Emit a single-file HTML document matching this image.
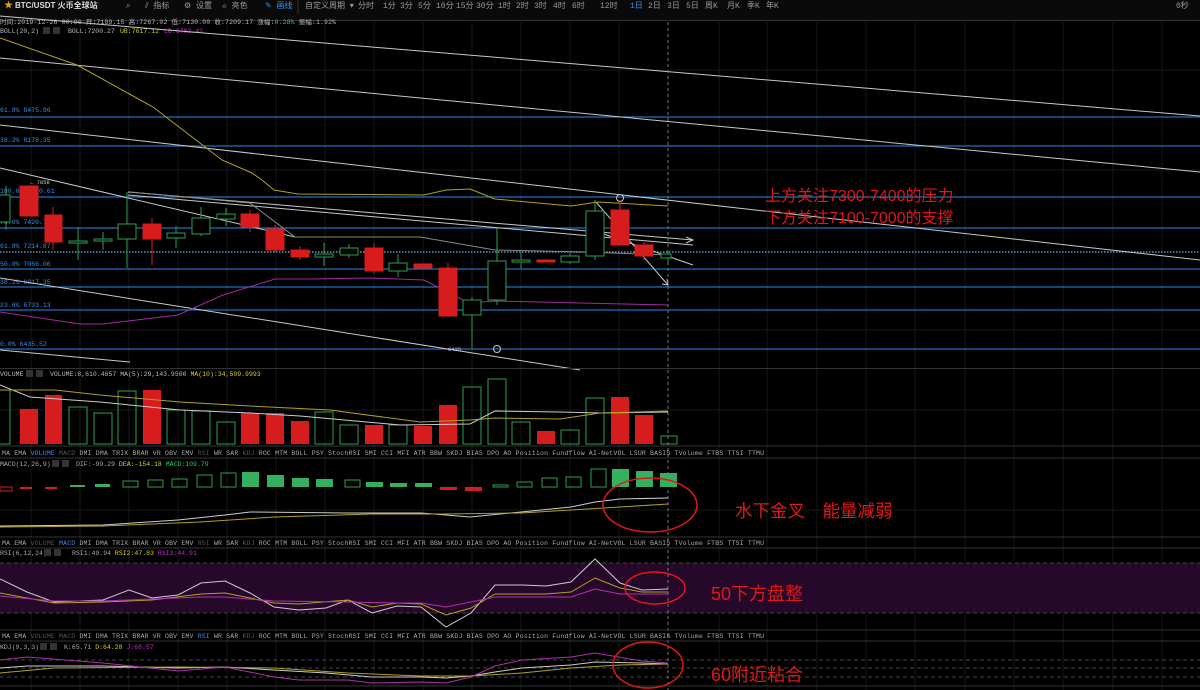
<!DOCTYPE html><html><head><meta charset="utf-8"><style>
html,body{margin:0;padding:0;background:#000;width:1200px;height:690px;overflow:hidden}
svg text{font-family:"Liberation Mono","Noto Sans CJK SC",monospace}
.t{font-family:"Liberation Sans","Noto Sans CJK SC",sans-serif}
</style></head><body>
<svg width="1200" height="690" viewBox="0 0 1200 690" xmlns="http://www.w3.org/2000/svg">
<rect width="1200" height="690" fill="#000"/>
<g stroke="#181818" stroke-width="1">
<line x1="31" y1="22" x2="31" y2="690"/><line x1="80" y1="22" x2="80" y2="690"/><line x1="129" y1="22" x2="129" y2="690"/><line x1="178" y1="22" x2="178" y2="690"/><line x1="227" y1="22" x2="227" y2="690"/><line x1="276" y1="22" x2="276" y2="690"/><line x1="325" y1="22" x2="325" y2="690"/><line x1="374" y1="22" x2="374" y2="690"/><line x1="423" y1="22" x2="423" y2="690"/><line x1="472" y1="22" x2="472" y2="690"/><line x1="521" y1="22" x2="521" y2="690"/><line x1="570" y1="22" x2="570" y2="690"/><line x1="619" y1="22" x2="619" y2="690"/><line x1="719" y1="22" x2="719" y2="690"/><line x1="767" y1="22" x2="767" y2="690"/><line x1="817" y1="22" x2="817" y2="690"/><line x1="866" y1="22" x2="866" y2="690"/><line x1="915" y1="22" x2="915" y2="690"/><line x1="965" y1="22" x2="965" y2="690"/><line x1="1014" y1="22" x2="1014" y2="690"/><line x1="1063" y1="22" x2="1063" y2="690"/><line x1="1113" y1="22" x2="1113" y2="690"/><line x1="1162" y1="22" x2="1162" y2="690"/>
<line x1="0" y1="70" x2="1200" y2="70"/><line x1="0" y1="170" x2="1200" y2="170"/><line x1="0" y1="330" x2="1200" y2="330"/><line x1="0" y1="410" x2="1200" y2="410"/><line x1="0" y1="510" x2="1200" y2="510"/>
</g>
<rect x="0" y="563" width="1200" height="50" fill="#26082a"/>
<g stroke="#444" stroke-dasharray="4,3"><line x1="0" y1="563" x2="1200" y2="563"/><line x1="0" y1="613" x2="1200" y2="613"/><line x1="0" y1="660" x2="1200" y2="660"/><line x1="0" y1="668" x2="1200" y2="668"/><line x1="0" y1="677" x2="1200" y2="677"/></g>
<rect x="0" y="0" width="1200" height="20" fill="#0a0a0a"/>
<line x1="0" y1="20.5" x2="1200" y2="20.5" stroke="#333"/>
<g class="t" font-size="8" fill="#9a9a9a">
<text x="4" y="8" fill="#e0a020" font-size="9">★</text>
<text x="15" y="8" fill="#ddd" font-size="8" font-weight="bold" class="t">BTC/USDT 火币全球站</text>
<text x="126" y="8">⌕</text><text x="145" y="8">⫽ 指标</text><text x="184" y="8">⚙ 设置</text><text x="222" y="8">☼ 亮色</text><text x="265" y="8" fill="#3a8ee6">✎ 画线</text>
<line x1="298" y1="0" x2="298" y2="14" stroke="#333"/>
<text x="305" y="8">自定义周期 ▾</text><text x="358" y="8">分时</text><text x="383" y="8">1分</text><text x="400" y="8">3分</text><text x="418" y="8">5分</text><text x="436" y="8">10分</text><text x="456" y="8">15分</text><text x="476" y="8">30分</text><text x="498" y="8">1时</text><text x="516" y="8">2时</text><text x="534" y="8">3时</text><text x="553" y="8">4时</text><text x="572" y="8">6时</text><text x="600" y="8">12时</text><text x="630" y="8" fill="#3a8ee6">1日</text><text x="648" y="8">2日</text><text x="667" y="8">3日</text><text x="686" y="8">5日</text><text x="705" y="8">周K</text><text x="727" y="8">月K</text><text x="747" y="8">季K</text><text x="766" y="8">年K</text>
<text x="1176" y="8">0秒</text>
</g>
<g font-size="6.5" fill="#bbb">
<text x="0" y="24" textLength="336">时间:2019-12-26 00:00  开:7189.15  高:7267.02  低:7130.00  收:7209.17  涨幅:<tspan fill="#2ecc5a">0.28%</tspan>  振幅:1.92%</text>
<text x="0" y="33">BOLL(20,2)</text><rect x="43" y="27" width="7" height="7" fill="#333"/><rect x="53" y="27" width="7" height="7" fill="#333"/>
<text x="68" y="33">BOLL:7200.27</text><text x="120" y="33" fill="#d6d020">UB:7617.12</text><text x="164" y="33" fill="#c030c0">LB:6783.42</text>
</g>
<g stroke="#1f6fc0" stroke-width="1.3">
<line x1="0" y1="117" x2="1200" y2="117"/><line x1="0" y1="146" x2="1200" y2="146"/><line x1="0" y1="197" x2="1200" y2="197"/><line x1="0" y1="228" x2="1200" y2="228"/><line x1="0" y1="269" x2="1200" y2="269"/><line x1="0" y1="287" x2="1200" y2="287"/><line x1="0" y1="310" x2="1200" y2="310"/><line x1="0" y1="349" x2="1200" y2="349"/>
</g>
<line x1="0" y1="252" x2="1200" y2="252" stroke="#5a9ad0" stroke-dasharray="1.5,1.5" stroke-width="1.5"/>
<g font-size="6.5" fill="#3a8ee6">
<text x="0" y="112">61.8% 8475.96</text><text x="0" y="142">38.2% 8178.35</text><text x="0" y="193">100.0% 7890.61</text><text x="0" y="224">78.6% 7420.73</text><text x="0" y="248">61.8% 7214.87</text><text x="0" y="266">50.0% 7066.06</text><text x="0" y="284">38.2% 6917.35</text><text x="0" y="307">23.6% 6733.13</text><text x="0" y="346">0.0% 6435.52</text>
</g>
<g stroke="#c8c8c8" stroke-width="1" fill="none">
<line x1="0" y1="16" x2="1200" y2="116"/>
<line x1="0" y1="58" x2="1200" y2="172"/>
<line x1="0" y1="125" x2="1200" y2="260"/>
<line x1="0" y1="278" x2="580" y2="370"/>
<line x1="0" y1="350" x2="130" y2="362"/>
<line x1="0" y1="168" x2="295" y2="237"/>
<line x1="128" y1="192" x2="693" y2="240"/>
<line x1="128" y1="195" x2="693" y2="245"/>
<polyline points="686,237 693,240 686,243"/>
<line x1="596" y1="202" x2="668" y2="285"/><polyline points="662,284 668,285 667,279"/>
<line x1="598" y1="232" x2="693" y2="265"/>
<circle cx="620" cy="198" r="3.5"/><circle cx="497" cy="349" r="3.5"/>
</g>
<polyline fill="none" stroke="#888" stroke-width="1" points="130,192 250,203 295,237 420,237 495,250 585,252 668,255"/>
<polyline fill="none" stroke="#b0a020" stroke-width="1" points="0,38 77,65 153,107 222,160 252,173 262,180 274,190 298,194 424,195 446,190 470,189 495,199 571,206 598,202 668,206"/>
<polyline fill="none" stroke="#a02aa0" stroke-width="1" points="0,312 80,324 103,324 178,315 223,295 275,279 312,279 370,278 424,280 469,303 495,301 580,303 668,305"/>
<text x="30" y="184" font-size="5.5" fill="#ccc">← 7858</text><text x="448" y="351" font-size="5.5" fill="#ccc">6435</text>
<line x1="668" y1="22" x2="668" y2="690" stroke="#777" stroke-dasharray="3,3"/>
<g stroke-width="1">
<g stroke="#2e9e4f" fill="#000">
<line x1="6" y1="186" x2="6" y2="230"/><rect x="-3" y="195" width="13" height="27"/>
<line x1="78" y1="227" x2="78" y2="260"/><rect x="69" y="241" width="18" height="2"/>
<line x1="103" y1="232" x2="103" y2="250"/><rect x="94" y="239" width="18" height="2"/>
<line x1="127" y1="192" x2="127" y2="268"/><rect x="118" y="224" width="18" height="15"/>
<line x1="176" y1="226" x2="176" y2="248"/><rect x="167" y="233" width="18" height="5"/>
<line x1="201" y1="207" x2="201" y2="236"/><rect x="192" y="218" width="18" height="16"/>
<line x1="226" y1="208" x2="226" y2="226"/><rect x="217" y="214" width="18" height="5"/>
<line x1="324" y1="243" x2="324" y2="266"/><rect x="315" y="254" width="18" height="3"/>
<line x1="349" y1="244" x2="349" y2="258"/><rect x="340" y="248" width="18" height="7"/>
<line x1="398" y1="254" x2="398" y2="277"/><rect x="389" y="263" width="18" height="8"/>
<line x1="472" y1="297" x2="472" y2="349"/><rect x="463" y="300" width="18" height="15"/>
<line x1="497" y1="228" x2="497" y2="305"/><rect x="488" y="261" width="18" height="39"/>
<line x1="521" y1="252" x2="521" y2="268"/><rect x="512" y="260" width="18" height="2"/>
<line x1="570" y1="253" x2="570" y2="264"/><rect x="561" y="256" width="18" height="6"/>
<line x1="595" y1="200" x2="595" y2="260"/><rect x="586" y="211" width="18" height="45"/>
<line x1="668" y1="250" x2="668" y2="262"/><rect x="661" y="254" width="10" height="4"/>
</g>
<g fill="#d61c1c" stroke="#d61c1c">
<rect x="20" y="186" width="18" height="30"/>
<line x1="53" y1="207" x2="53" y2="250"/><rect x="45" y="215" width="17" height="27"/>
<line x1="152" y1="218" x2="152" y2="265"/><rect x="143" y="224" width="18" height="15"/>
<line x1="250" y1="210" x2="250" y2="232"/><rect x="241" y="214" width="18" height="13"/>
<line x1="275" y1="225" x2="275" y2="252"/><rect x="266" y="229" width="18" height="21"/>
<line x1="300" y1="246" x2="300" y2="260"/><rect x="291" y="250" width="18" height="7"/>
<line x1="374" y1="243" x2="374" y2="274"/><rect x="365" y="248" width="18" height="23"/>
<rect x="414" y="264" width="18" height="4"/>
<line x1="448" y1="263" x2="448" y2="268"/><rect x="439" y="268" width="18" height="48"/>
<rect x="537" y="260" width="18" height="2"/>
<line x1="620" y1="200" x2="620" y2="245"/><rect x="611" y="210" width="18" height="35"/>
<line x1="644" y1="242" x2="644" y2="260"/><rect x="635" y="245" width="18" height="11"/>
</g>
</g>
<line x1="0" y1="368.5" x2="1200" y2="368.5" stroke="#333"/>
<g font-size="6.5" fill="#bbb"><text x="0" y="376">VOLUME</text><rect x="26" y="370" width="7" height="7" fill="#333"/><rect x="36" y="370" width="7" height="7" fill="#333"/><text x="50" y="376">VOLUME:8,610.4657  MA(5):29,143.9500  <tspan fill="#d6d020">MA(10):34,509.9993</tspan></text></g>
<g stroke="#2e9e4f" fill="none">
<rect x="-3" y="390" width="13" height="54"/><rect x="69" y="407" width="18" height="37"/><rect x="94" y="413" width="18" height="31"/><rect x="118" y="391" width="18" height="53"/><rect x="167" y="410" width="18" height="34"/><rect x="192" y="411" width="18" height="33"/><rect x="217" y="422" width="18" height="22"/><rect x="315" y="412" width="18" height="32"/><rect x="340" y="425" width="18" height="19"/><rect x="389" y="425" width="18" height="19"/><rect x="463" y="387" width="18" height="57"/><rect x="488" y="379" width="18" height="65"/><rect x="512" y="422" width="18" height="22"/><rect x="561" y="430" width="18" height="14"/><rect x="586" y="398" width="18" height="46"/><rect x="661" y="436" width="16" height="8"/>
</g>
<g fill="#d61c1c">
<rect x="20" y="409" width="18" height="35"/><rect x="45" y="395" width="17" height="49"/><rect x="143" y="390" width="18" height="54"/><rect x="241" y="413" width="18" height="31"/><rect x="266" y="413" width="18" height="31"/><rect x="291" y="421" width="18" height="23"/><rect x="365" y="425" width="18" height="19"/><rect x="414" y="426" width="18" height="18"/><rect x="439" y="405" width="18" height="39"/><rect x="537" y="431" width="18" height="13"/><rect x="611" y="397" width="18" height="47"/><rect x="635" y="415" width="18" height="29"/>
</g>
<polyline fill="none" stroke="#ccc" points="0,385 30,397 100,402 180,410 250,413 300,416 400,425 470,424 495,411 560,412 600,413 668,412"/>
<polyline fill="none" stroke="#b0a020" points="0,390 55,390 100,395 180,402 250,406 330,410 420,422 470,420 495,418 560,419 600,413 668,411"/>
<g>
<line x1="0" y1="446" x2="1200" y2="446" stroke="#333"/><line x1="0" y1="458" x2="1200" y2="458" stroke="#333"/>
<line x1="0" y1="537" x2="1200" y2="537" stroke="#333"/><line x1="0" y1="548" x2="1200" y2="548" stroke="#333"/>
<line x1="0" y1="630" x2="1200" y2="630" stroke="#333"/><line x1="0" y1="641" x2="1200" y2="641" stroke="#333"/>
<line x1="0" y1="686" x2="1200" y2="686" stroke="#333"/>
</g>
<g font-size="6.5" fill="#aaa">
<text x="2" y="455" textLength="762">MA EMA <tspan fill="#3a8ee6">VOLUME</tspan> <tspan fill="#555">MACD</tspan> DMI DMA TRIX BRAR VR OBV EMV <tspan fill="#555">RSI</tspan> WR SAR <tspan fill="#555">KDJ</tspan> ROC MTM BOLL PSY StochRSI SMI CCI MFI ATR BBW SKDJ BIAS DPO AO Position Fundflow AI-NetVOL LSUR BASIS TVolume FTBS TTSI TTMU</text>
<text x="2" y="545" textLength="762">MA EMA <tspan fill="#555">VOLUME</tspan> <tspan fill="#3a8ee6">MACD</tspan> DMI DMA TRIX BRAR VR OBV EMV <tspan fill="#555">RSI</tspan> WR SAR <tspan fill="#555">KDJ</tspan> ROC MTM BOLL PSY StochRSI SMI CCI MFI ATR BBW SKDJ BIAS DPO AO Position Fundflow AI-NetVOL LSUR BASIS TVolume FTBS TTSI TTMU</text>
<text x="2" y="638" textLength="762">MA EMA <tspan fill="#555">VOLUME</tspan> <tspan fill="#555">MACD</tspan> DMI DMA TRIX BRAR VR OBV EMV <tspan fill="#3a8ee6">RSI</tspan> WR SAR <tspan fill="#555">KDJ</tspan> ROC MTM BOLL PSY StochRSI SMI CCI MFI ATR BBW SKDJ BIAS DPO AO Position Fundflow AI-NetVOL LSUR BASIS TVolume FTBS TTSI TTMU</text>
<text x="0" y="466">MACD(12,26,9)</text><rect x="52" y="460" width="7" height="7" fill="#333"/><rect x="62" y="460" width="7" height="7" fill="#333"/><text x="76" y="466">DIF:-99.29  <tspan fill="#d6d020">DEA:-154.18</tspan>  <tspan fill="#2ecc5a">MACD:109.79</tspan></text>
<text x="0" y="555">RSI(6,12,24)</text><rect x="44" y="549" width="7" height="7" fill="#333"/><rect x="54" y="549" width="7" height="7" fill="#333"/><text x="72" y="555">RSI1:49.94  <tspan fill="#d6d020">RSI2:47.83</tspan>  <tspan fill="#c030c0">RSI3:44.91</tspan></text>
<text x="0" y="649">KDJ(9,3,3)</text><rect x="40" y="643" width="7" height="7" fill="#333"/><rect x="50" y="643" width="7" height="7" fill="#333"/><text x="64" y="649">K:65.71  <tspan fill="#d6d020">D:64.28</tspan>  <tspan fill="#c030c0">J:68.57</tspan></text>
</g>
<g stroke="#2e9e4f" fill="none">
<rect x="123" y="481" width="15" height="6"/><rect x="148" y="480" width="15" height="7"/><rect x="172" y="479" width="15" height="8"/><rect x="197" y="475" width="15" height="12"/><rect x="221" y="473" width="15" height="14"/><rect x="345" y="480" width="15" height="7"/><rect x="493" y="485" width="15" height="2"/><rect x="517" y="482" width="15" height="5"/><rect x="542" y="478" width="15" height="9"/><rect x="566" y="477" width="15" height="10"/><rect x="591" y="469" width="15" height="18"/>
</g>
<g fill="#35b060">
<rect x="70" y="485" width="15" height="2"/><rect x="95" y="484" width="15" height="3"/><rect x="242" y="472" width="17" height="15"/><rect x="267" y="475" width="17" height="12"/><rect x="292" y="478" width="17" height="9"/><rect x="316" y="479" width="17" height="8"/><rect x="366" y="482" width="17" height="5"/><rect x="390" y="483" width="17" height="4"/><rect x="415" y="483" width="17" height="4"/><rect x="612" y="469" width="17" height="18"/><rect x="636" y="471" width="17" height="16"/><rect x="660" y="473" width="17" height="14"/>
</g>
<g fill="#d61c1c"><rect x="0" y="487" width="12" height="4" fill="none" stroke="#d61c1c"/><rect x="20" y="487" width="12" height="2"/><rect x="45" y="487" width="12" height="2"/><rect x="440" y="487" width="17" height="3"/><rect x="465" y="487" width="17" height="4"/></g>
<polyline fill="none" stroke="#ccc" points="0,526 103,525 178,520 225,515 250,512 348,513 421,513 446,515 470,517 521,512 571,507 595,502 620,499 668,498"/>
<polyline fill="none" stroke="#b0a020" points="0,527 103,526 200,522 275,517 372,514 446,514 521,513 571,510 620,507 668,504"/>
<polyline fill="none" stroke="#ccc" points="0,579 27,592 54,602 103,600 129,590 152,598 178,595 201,583 225,581 250,593 274,607 299,610 326,608 348,600 372,613 397,606 421,607 446,627 471,613 495,585 522,585 546,586 571,582 595,559 620,583 642,590 668,589"/>
<polyline fill="none" stroke="#b0a020" points="0,593 54,603 103,602 152,600 201,594 225,593 250,598 274,603 299,604 348,600 372,607 397,603 421,604 446,615 471,608 495,594 546,594 571,592 595,578 620,588 642,592 668,592"/>
<polyline fill="none" stroke="#b030b0" points="0,596 54,601 103,601 152,599 201,597 225,597 274,601 348,602 397,603 421,603 446,607 495,597 571,597 595,589 620,594 668,594"/>
<polyline fill="none" stroke="#ccc" points="0,668 27,666 103,666 178,668 225,667 274,670 326,673 372,677 421,677 446,678 471,676 495,672 522,668 571,665 595,662 642,663 668,664"/>
<polyline fill="none" stroke="#b0a020" points="0,673 54,668 178,667 274,668 348,673 421,676 471,676 522,673 571,668 620,665 668,664"/>
<polyline fill="none" stroke="#b030b0" points="0,660 27,657 103,663 178,671 225,667 274,677 299,680 348,680 372,683 421,682 446,683 471,677 495,666 522,660 571,657 595,653 642,661 668,663"/>
<g fill="none" stroke="#e01818" stroke-width="1.5">
<ellipse cx="650" cy="505" rx="47" ry="27"/><ellipse cx="655" cy="588" rx="30" ry="16"/><ellipse cx="648" cy="665" rx="35" ry="23"/>
</g>
<g class="t" fill="#e01818">
<text x="765" y="201" class="t" font-size="16">上方关注7300-7400的压力</text>
<text x="765" y="223" class="t" font-size="16">下方关注7100-7000的支撑</text>
<text x="735" y="517" class="t" font-size="17.5">水下金叉　能量减弱</text>
<text x="711" y="600" class="t" font-size="18">50下方盘整</text>
<text x="711" y="681" class="t" font-size="18">60附近粘合</text>
</g>
</svg>
</body></html>
